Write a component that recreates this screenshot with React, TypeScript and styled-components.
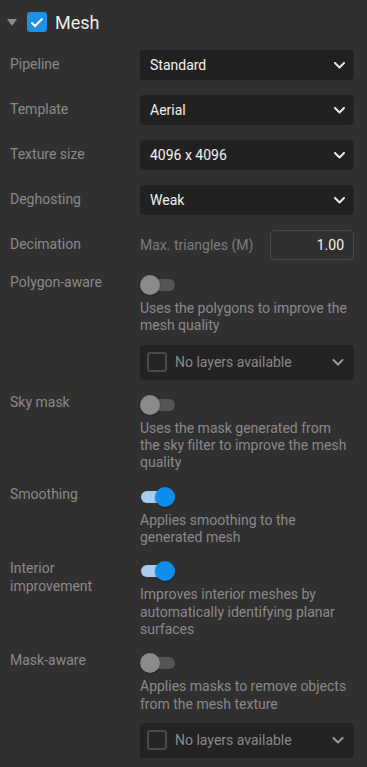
import React from "react";
import styled, { createGlobalStyle } from "styled-components";

const Global = createGlobalStyle`
  html, body { margin: 0; padding: 0; background: #303030; }
  body { font-family: Roboto, "Noto Sans", Arial, sans-serif; -webkit-font-smoothing: antialiased; }
  * { box-sizing: border-box; }
`;

const Panel = styled.div`
  width: 367px;
  min-height: 767px;
  background: #303030;
  padding: 0 13px 0 10px;
`;

const Header = styled.div`
  height: 44px;
  display: flex;
  align-items: center;
  margin-left: -3px;
`;

const Caret = styled.span`
  width: 0;
  height: 0;
  border-left: 5px solid transparent;
  border-right: 5px solid transparent;
  border-top: 7px solid #8a8a8a;
  margin-right: 10px;
  margin-top: 1px;
`;

const CheckBoxBox = styled.span<{ $checked?: boolean }>`
  width: 20px;
  height: 20px;
  border-radius: 3px;
  display: inline-flex;
  align-items: center;
  justify-content: center;
  flex-shrink: 0;
  background: ${(p) => (p.$checked ? "#1e8fe6" : "#242424")};
  border: ${(p) => (p.$checked ? "none" : "2px solid #4a4a4a")};
`;

const Title = styled.span`
  color: #ececec;
  font-size: 18px;
  margin-left: 8px;
`;

const Form = styled.div`
  display: flex;
  flex-direction: column;
  gap: 15px;
  padding-top: 6px;
`;

const Row = styled.div<{ $top?: boolean }>`
  display: grid;
  grid-template-columns: 130px 1fr;
  align-items: ${(p) => (p.$top ? "start" : "center")};
`;

const Label = styled.div<{ $top?: boolean }>`
  color: #8a8a8a;
  font-size: 14px;
  line-height: 17.33px;
  margin-top: ${(p) => (p.$top ? "-1px" : "0")};
`;

const Select = styled.div`
  height: 30px;
  background: #212121;
  border-radius: 4px;
  display: flex;
  align-items: center;
  justify-content: space-between;
  padding: 0 9px 0 10px;
  color: #f2f2f2;
  font-size: 14px;
`;

const Inline = styled.div`
  display: flex;
  align-items: center;
  justify-content: space-between;
  color: #7c7c7c;
  font-size: 14px;
`;

const NumberBox = styled.div`
  width: 84px;
  height: 30px;
  border: 1px solid #474747;
  border-radius: 4px;
  display: flex;
  align-items: center;
  justify-content: flex-end;
  padding-right: 9px;
  color: #f2f2f2;
  font-size: 14px;
`;

const Column = styled.div`
  display: flex;
  flex-direction: column;
`;

const Track = styled.div<{ $on?: boolean }>`
  position: relative;
  width: 35px;
  height: 20px;
  &::before {
    content: "";
    position: absolute;
    left: 1px;
    right: 0;
    top: 4px;
    height: 12px;
    border-radius: 6px;
    background: ${(p) => (p.$on ? "#a9cdf1" : "#555555")};
  }
`;

const Thumb = styled.span<{ $on?: boolean }>`
  position: absolute;
  top: 0;
  left: ${(p) => (p.$on ? "15px" : "0")};
  width: 20px;
  height: 20px;
  border-radius: 50%;
  background: ${(p) => (p.$on ? "#0d8eed" : "#8a8a8a")};
  box-shadow: 0 1px 2px rgba(0, 0, 0, 0.35);
`;

const Desc = styled.div`
  margin-top: 5px;
  color: #8a8a8a;
  font-size: 14px;
  line-height: 17.33px;
`;

const LayerSelect = styled.div`
  margin-top: 10px;
  height: 35px;
  background: #232323;
  border-radius: 4px;
  display: flex;
  align-items: center;
  padding: 0 10px 0 7px;
  gap: 8px;
  color: #8a8a8a;
  font-size: 14px;
`;

const Grow = styled.span`
  flex: 1;
`;

const Chevron = ({ color = "#e8e8e8", w = 11 }: { color?: string; w?: number }) => (
  <svg width={w} height={7} viewBox="0 0 11 7" fill="none">
    <polyline points="1,1 5.5,5.5 10,1" stroke={color} strokeWidth="2" strokeLinecap="round" strokeLinejoin="round" />
  </svg>
);

const Toggle = ({ on }: { on?: boolean }) => (
  <Track $on={on}>
    <Thumb $on={on} />
  </Track>
);

const Layers = () => (
  <LayerSelect>
    <CheckBoxBox />
    <Grow>No layers available</Grow>
    <Chevron color="#9a9a9a" w={12} />
  </LayerSelect>
);

const selects: [string, string][] = [
  ["Pipeline", "Standard"],
  ["Template", "Aerial"],
  ["Texture size", "4096 x 4096"],
  ["Deghosting", "Weak"],
];

const toggles: { label: string; on: boolean; desc: string; layers?: boolean }[] = [
  { label: "Polygon-aware", on: false, desc: "Uses the polygons to improve the mesh quality", layers: true },
  { label: "Sky mask", on: false, desc: "Uses the mask generated from the sky filter to improve the mesh quality" },
  { label: "Smoothing", on: true, desc: "Applies smoothing to the generated mesh" },
  { label: "Interior improvement", on: true, desc: "Improves interior meshes by automatically identifying planar surfaces" },
  { label: "Mask-aware", on: false, desc: "Applies masks to remove objects from the mesh texture", layers: true },
];

export default function App() {
  return (
    <>
      <Global />
      <Panel>
        <Header>
          <Caret />
          <CheckBoxBox $checked>
            <svg width="14" height="11" viewBox="0 0 14 11" fill="none">
              <polyline points="1.5,5.5 5,9 12.5,1.5" stroke="#fff" strokeWidth="2" />
            </svg>
          </CheckBoxBox>
          <Title>Mesh</Title>
        </Header>
        <Form>
          {selects.map(([l, v]) => (
            <Row key={l}>
              <Label>{l}</Label>
              <Select>
                <span>{v}</span>
                <Chevron />
              </Select>
            </Row>
          ))}
          <Row>
            <Label>Decimation</Label>
            <Inline>
              <span>Max. triangles (M)</span>
              <NumberBox>1.00</NumberBox>
            </Inline>
          </Row>
          {toggles.map((t) => (
            <Row key={t.label} $top>
              <Label $top>{t.label}</Label>
              <Column>
                <Toggle on={t.on} />
                <Desc>{t.desc}</Desc>
                {t.layers && <Layers />}
              </Column>
            </Row>
          ))}
        </Form>
      </Panel>
    </>
  );
}
